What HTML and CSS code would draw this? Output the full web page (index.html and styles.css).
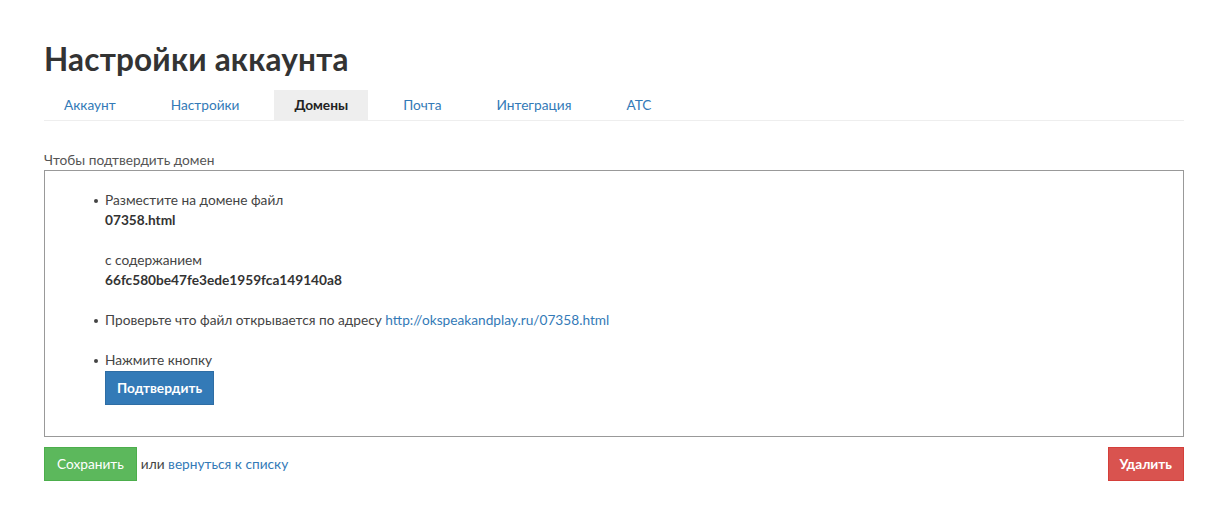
FILE: index.html
```html
<!DOCTYPE html>
<html lang="ru">
<head>
<meta charset="utf-8">
<title>Настройки аккаунта</title>
<link rel="stylesheet" href="styles.css">
</head>
<body>
<div class="page">
  <h1 class="title">Настройки аккаунта</h1>
  <ul class="tabs">
    <li class="tab"><a href="#">Аккаунт</a></li>
    <li class="tab"><a href="#">Настройки</a></li>
    <li class="tab active"><a href="#">Домены</a></li>
    <li class="tab"><a href="#">Почта</a></li>
    <li class="tab"><a href="#">Интеграция</a></li>
    <li class="tab"><a href="#">АТС</a></li>
  </ul>
  <div class="label">Чтобы подтвердить домен</div>
  <div class="box">
    <ul class="steps">
      <li class="step">
        <div>Разместите на домене файл</div>
        <div class="strong">07358.html</div>
        <div class="spacer"></div>
        <div>с содержанием</div>
        <div class="strong">66fc580be47fe3ede1959fca149140a8</div>
      </li>
      <li class="step">
        <div>Проверьте что файл открывается по адресу <a class="link" href="#">http://okspeakandplay.ru/07358.html</a></div>
      </li>
      <li class="step">
        <div>Нажмите кнопку</div>
        <button class="btn btn-primary">Подтвердить</button>
      </li>
    </ul>
  </div>
  <div class="actions">
    <div class="left">
      <button class="btn btn-success">Сохранить</button>
      <span class="or">или <a class="link" href="#">вернуться к списку</a></span>
    </div>
    <button class="btn btn-danger">Удалить</button>
  </div>
</div>
</body>
</html>
```
FILE: styles.css
```css
* { box-sizing: border-box; }
body {
  margin: 0;
  background: #fff;
  color: #333;
  font-family: "Lato", "Open Sans", sans-serif;
  font-size: 13.7px;
  line-height: 20px;
}
.page {
  width: 1140px;
  margin-left: 44px;
  padding-top: 37px;
}
.title {
  margin: 0;
  font-size: 31.5px;
  line-height: 44px;
  font-weight: 700;
  color: #333;
  letter-spacing: 0.2px;
}
.tabs {
  list-style: none;
  margin: 9px 0 0;
  padding: 0;
  display: flex;
  border-bottom: 1px solid #eee;
}
.tab { margin-right: 15px; }
.tab a {
  display: block;
  padding: 5px 20px;
  line-height: 20px;
  color: #337ab7;
  text-decoration: none;
}
.tab.active a {
  background: #eee;
  color: #222;
  font-weight: 700;
}
.label {
  margin-top: 29px;
  color: #555;
  line-height: 20px;
}
.box {
  border: 1px solid #999;
  height: 267px;
  padding: 19px 0 0 60px;
}
.steps {
  margin: 0;
  padding: 0;
  list-style: none;
}
.step {
  position: relative;
  margin-bottom: 20px;
  color: #444;
}
.step::before {
  content: "";
  position: absolute;
  left: -11px;
  top: 9px;
  width: 4px;
  height: 4px;
  border-radius: 50%;
  background: #444;
}
.strong { font-weight: 700; color: #333; }
.spacer { height: 20px; }
.link { color: #337ab7; text-decoration: none; }
.btn {
  display: inline-block;
  border: 1px solid transparent;
  font-family: inherit;
  font-size: 13.7px;
  line-height: 20px;
  padding: 6px 11px;
  color: #fff;
  font-weight: 700;
  cursor: pointer;
  border-radius: 0;
}
.btn-primary {
  background: #337ab7;
  border-color: #2e6da4;
  margin-top: 1px;
}
.btn-success {
  background: #5cb85c;
  border-color: #4cae4c;
  font-weight: 400;
  padding: 6px 12px;
}
.btn-danger {
  background: #d9534f;
  border-color: #d43f3a;
}
.actions {
  margin-top: 10px;
  display: flex;
  justify-content: space-between;
  align-items: flex-start;
}
.left { display: flex; align-items: center; gap: 4px; }
.or { color: #444; }
```
